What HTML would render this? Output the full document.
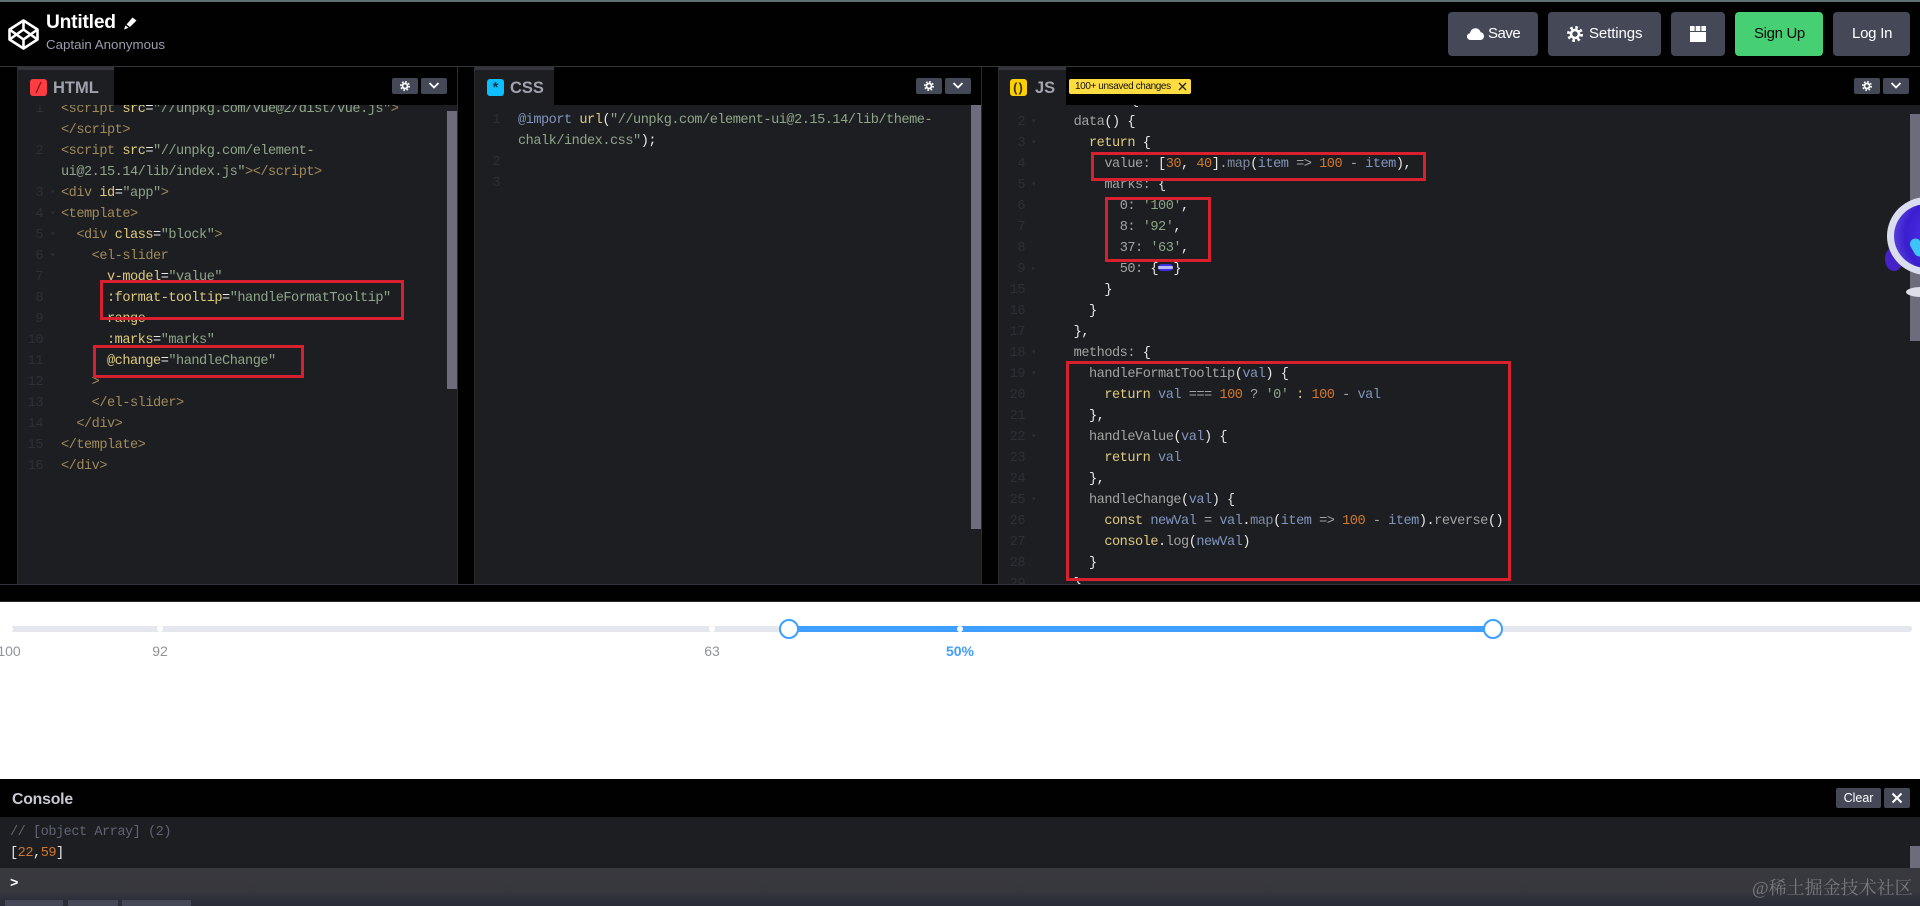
<!DOCTYPE html>
<html><head><meta charset="utf-8"><title>Untitled</title>
<style>
html,body{margin:0;padding:0;background:#010101;width:1920px;height:906px;overflow:hidden}
body{position:relative;font-family:"Liberation Sans",sans-serif;filter:blur(.35px)}
.a{position:absolute}
.btn{position:absolute;top:12px;height:44px;background:#444857;border-radius:4px;color:#fff;font-size:15px;line-height:44px}
.btn span{position:absolute;top:0;white-space:nowrap}
.sb{position:absolute;top:78px;width:26px;height:16px;background:#444857;border-radius:2px}
.tab{position:absolute;top:67px;height:38px;background:#1d1e22;border-top:3px solid #35363b;box-sizing:border-box}
.tt{position:absolute;top:79px;font-size:16.5px;font-weight:bold;color:#a0a2ad;line-height:18px}
.ic{position:absolute;top:79px;width:17px;height:17px;border-radius:3px}
.code{position:absolute;top:105px;height:479px;background:#1d1e22;overflow:hidden;font-family:"Liberation Mono",monospace;font-size:13.6px;letter-spacing:-.49px;color:#aaa}
.r{position:absolute;left:0;right:0;height:21px;line-height:21px;white-space:pre;transform:translateY(1px)}
.n{position:absolute;color:#2e2f34;text-align:right;width:30px;top:0}
.f{position:absolute;top:0;color:#2e2f34;font-size:7px;letter-spacing:0}
.x{position:absolute;top:0}
.h .x{margin-left:-1px}
.t{color:#a08a5b}.y{color:#ddca7e}.s{color:#8fa588}.w{color:#e8e8e8}.p{color:#a3a3a3}.v{color:#8195bd}.o{color:#d0782a}.m{color:#7d8aa0}
.red{position:absolute;border:3px solid #d8202e;box-sizing:border-box;z-index:5}
.sc{position:absolute;background:#6c6c7c;width:10px}
</style></head><body>

<div class="a" style="left:0;top:0;width:1920px;height:2px;background:#5f7070"></div>
<div class="a" style="left:0;top:66px;width:1920px;height:1px;background:#343538"></div>

<!-- logo -->
<svg class="a" style="left:7px;top:18px" width="33" height="33" viewBox="0 0 33 33" fill="none" stroke="#fff" stroke-width="2.6" stroke-linejoin="round">
<path d="M16.5 2.5L30.5 11.5V21.5L16.5 30.5L2.5 21.5V11.5Z"/>
<path d="M16.5 2.5V11.5M16.5 21.5V30.5M2.5 11.5L16.5 21.5L30.5 11.5M2.5 21.5L16.5 11.5L30.5 21.5"/>
</svg>
<div class="a" style="left:46px;top:11px;color:#fff;font-size:19.2px;font-weight:bold;line-height:24px;letter-spacing:-.2px">Untitled</div>
<svg class="a" style="left:123px;top:16px" width="15" height="15" viewBox="0 0 15 15"><path d="M9.5 1.5L13.5 4.5L7 11L3.5 8.5Z" fill="#fff"/><path d="M2.5 9.5L5.5 11.8L1 13.5Z" fill="#fff"/></svg>
<div class="a" style="left:46px;top:36px;color:#9b9dad;font-size:13.3px;line-height:18px">Captain Anonymous</div>

<!-- header buttons -->
<div class="btn" style="left:1448px;width:90px">
<svg class="a" style="left:19px;top:16px" width="17" height="12" viewBox="0 0 17 12"><path d="M4 12C1.5 12 0 10.5 0 8.6C0 6.8 1.3 5.5 3 5.3C3.4 2.4 5.6.3 8.5.3C11 .3 13 1.9 13.6 4.3C15.6 4.5 17 6.2 17 8.2C17 10.4 15.3 12 13 12Z" fill="#fff"/></svg>
<span style="left:40px;letter-spacing:-.5px">Save</span></div>
<div class="btn" style="left:1548px;width:113px">
<svg class="a" style="left:19px;top:14px" width="16" height="16" viewBox="0 0 16 16"><circle cx="8" cy="8" r="6.6" fill="none" stroke="#fff" stroke-width="2.8" stroke-dasharray="2.6 2.6"/><circle cx="8" cy="8" r="4" fill="none" stroke="#fff" stroke-width="2.6"/></svg>
<span style="left:41px;letter-spacing:-.1px">Settings</span></div>
<div class="btn" style="left:1671px;width:54px">
<svg class="a" style="left:19px;top:14px" width="16" height="16" viewBox="0 0 16 16" fill="#fff"><rect x="0" y="0" width="4.6" height="5"/><rect x="5.7" y="0" width="4.6" height="5"/><rect x="11.4" y="0" width="4.6" height="5"/><rect x="0" y="6" width="16" height="10"/></svg></div>
<div class="btn" style="left:1735px;width:88px;background:#47cf73;color:#0a0a0a"><span style="left:19px;letter-spacing:-.35px">Sign Up</span></div>
<div class="btn" style="left:1833px;width:77px"><span style="left:19px;letter-spacing:-.25px">Log In</span></div>

<!-- panel edges -->
<div class="a" style="left:17px;top:67px;width:1px;height:517px;background:#2b2c30"></div>
<div class="a" style="left:457px;top:67px;width:1px;height:517px;background:#2b2c30"></div>
<div class="a" style="left:474px;top:67px;width:1px;height:517px;background:#2b2c30"></div>
<div class="a" style="left:981px;top:67px;width:1px;height:517px;background:#2b2c30"></div>
<div class="a" style="left:998px;top:67px;width:1px;height:517px;background:#2b2c30"></div>

<!-- HTML panel -->
<div class="tab" style="left:18px;width:96px"></div>
<div class="ic" style="left:30px;background:#ff3c41"><svg width="17" height="17" viewBox="0 0 17 17"><path d="M11 3L6 14" stroke="#7a1a1e" stroke-width="1.3"/></svg></div>
<div class="tt" style="left:53px">HTML</div>
<div class="sb" style="left:392px"><svg class="a" style="left:8px;top:3px" width="10" height="10" viewBox="0 0 16 16"><circle cx="8" cy="8" r="6.6" fill="none" stroke="#fff" stroke-width="2.8" stroke-dasharray="2.6 2.6"/><circle cx="8" cy="8" r="4" fill="none" stroke="#fff" stroke-width="2.8"/></svg></div>
<div class="sb" style="left:421px"><svg class="a" style="left:7px;top:3px" width="12" height="9" viewBox="0 0 12 9"><path d="M1.5 2L6 6.5L10.5 2" fill="none" stroke="#fff" stroke-width="1.8"/></svg></div>
<div class="code h" style="left:18px;width:439px">
<div class="r" style="top:-7px"><span class="n" style="left:-5px">1</span><span class="x" style="left:44px"><span class="t">&lt;script</span> <span class="y">src</span><span class="w">=</span><span class="s">"//unpkg.com/vue@2/dist/vue.js"</span><span class="t">&gt;</span></span></div>
<div class="r" style="top:14px"><span class="x" style="left:44px"><span class="t">&lt;/script&gt;</span></span></div>
<div class="r" style="top:35px"><span class="n" style="left:-5px">2</span><span class="x" style="left:44px"><span class="t">&lt;script</span> <span class="y">src</span><span class="w">=</span><span class="s">"//unpkg.com/element-</span></span></div>
<div class="r" style="top:56px"><span class="x" style="left:44px"><span class="s">ui@2.15.14/lib/index.js"</span><span class="t">&gt;&lt;/script&gt;</span></span></div>
<div class="r" style="top:77px"><span class="n" style="left:-5px">3</span><span class="f" style="left:33px">▾</span><span class="x" style="left:44px"><span class="t">&lt;div</span> <span class="y">id</span><span class="w">=</span><span class="s">"app"</span><span class="t">&gt;</span></span></div>
<div class="r" style="top:98px"><span class="n" style="left:-5px">4</span><span class="f" style="left:33px">▾</span><span class="x" style="left:44px"><span class="t">&lt;template&gt;</span></span></div>
<div class="r" style="top:119px"><span class="n" style="left:-5px">5</span><span class="f" style="left:33px">▾</span><span class="x" style="left:44px">  <span class="t">&lt;div</span> <span class="y">class</span><span class="w">=</span><span class="s">"block"</span><span class="t">&gt;</span></span></div>
<div class="r" style="top:140px"><span class="n" style="left:-5px">6</span><span class="f" style="left:33px">▾</span><span class="x" style="left:44px">    <span class="t">&lt;el-slider</span></span></div>
<div class="r" style="top:161px"><span class="n" style="left:-5px">7</span><span class="x" style="left:44px">      <span class="y">v-model</span><span class="w">=</span><span class="s">"value"</span></span></div>
<div class="r" style="top:182px"><span class="n" style="left:-5px">8</span><span class="x" style="left:44px">      <span class="y">:format-tooltip</span><span class="w">=</span><span class="s">"handleFormatTooltip"</span></span></div>
<div class="r" style="top:203px"><span class="n" style="left:-5px">9</span><span class="x" style="left:44px">      <span class="y">range</span></span></div>
<div class="r" style="top:224px"><span class="n" style="left:-5px">10</span><span class="x" style="left:44px">      <span class="y">:marks</span><span class="w">=</span><span class="s">"marks"</span></span></div>
<div class="r" style="top:245px"><span class="n" style="left:-5px">11</span><span class="x" style="left:44px">      <span class="y">@change</span><span class="w">=</span><span class="s">"handleChange"</span></span></div>
<div class="r" style="top:266px"><span class="n" style="left:-5px">12</span><span class="x" style="left:44px">    <span class="t">&gt;</span></span></div>
<div class="r" style="top:287px"><span class="n" style="left:-5px">13</span><span class="x" style="left:44px">    <span class="t">&lt;/el-slider&gt;</span></span></div>
<div class="r" style="top:308px"><span class="n" style="left:-5px">14</span><span class="x" style="left:44px">  <span class="t">&lt;/div&gt;</span></span></div>
<div class="r" style="top:329px"><span class="n" style="left:-5px">15</span><span class="x" style="left:44px"><span class="t">&lt;/template&gt;</span></span></div>
<div class="r" style="top:350px"><span class="n" style="left:-5px">16</span><span class="x" style="left:44px"><span class="t">&lt;/div&gt;</span></span></div>
</div>
<div class="sc" style="left:447px;top:111px;height:278px"></div>

<!-- CSS panel -->
<div class="tab" style="left:475px;width:79px"></div>
<div class="ic" style="left:487px;background:#0ebeff"><div class="a" style="left:0;top:3px;width:17px;text-align:center;font:bold 15px/15px 'Liberation Mono',monospace;color:#0a3a50">*</div></div>
<div class="tt" style="left:510px">CSS</div>
<div class="sb" style="left:916px"><svg class="a" style="left:8px;top:3px" width="10" height="10" viewBox="0 0 16 16"><circle cx="8" cy="8" r="6.6" fill="none" stroke="#fff" stroke-width="2.8" stroke-dasharray="2.6 2.6"/><circle cx="8" cy="8" r="4" fill="none" stroke="#fff" stroke-width="2.8"/></svg></div>
<div class="sb" style="left:945px"><svg class="a" style="left:7px;top:3px" width="12" height="9" viewBox="0 0 12 9"><path d="M1.5 2L6 6.5L10.5 2" fill="none" stroke="#fff" stroke-width="1.8"/></svg></div>
<div class="code" style="left:475px;width:506px">
<div class="r" style="top:4px"><span class="n" style="left:-5px">1</span><span class="x" style="left:43px"><span class="v">@import</span> <span class="y">url</span><span class="w">(</span><span class="s">"//unpkg.com/element-ui@2.15.14/lib/theme-</span></span></div>
<div class="r" style="top:25px"><span class="x" style="left:43px"><span class="s">chalk/index.css"</span><span class="w">);</span></span></div>
<div class="r" style="top:46px"><span class="n" style="left:-5px">2</span></div>
<div class="r" style="top:67px"><span class="n" style="left:-5px">3</span></div>
</div>
<div class="sc" style="left:971px;top:105px;height:424px"></div>

<!-- JS panel -->
<div class="tab" style="left:999px;width:67px"></div>
<div class="ic" style="left:1010px;background:#fcd000"><div class="a" style="left:0;top:1px;width:17px;text-align:center;font:bold 13px/15px 'Liberation Sans',sans-serif;color:#3a2f00;letter-spacing:1px">()</div></div>
<div class="tt" style="left:1035px">JS</div>
<div class="a" style="left:1069px;top:79px;width:122px;height:15px;background:#ffdd40;border-radius:2px;color:#111;font-size:10px;line-height:15px;white-space:nowrap"><span class="a" style="left:6px;letter-spacing:-.4px">100+ unsaved changes</span>
<svg class="a" style="left:109px;top:3px" width="9" height="9" viewBox="0 0 9 9"><path d="M1 1L8 8M8 1L1 8" stroke="#222" stroke-width="1.3"/></svg></div>
<div class="sb" style="left:1854px"><svg class="a" style="left:8px;top:3px" width="10" height="10" viewBox="0 0 16 16"><circle cx="8" cy="8" r="6.6" fill="none" stroke="#fff" stroke-width="2.8" stroke-dasharray="2.6 2.6"/><circle cx="8" cy="8" r="4" fill="none" stroke="#fff" stroke-width="2.8"/></svg></div>
<div class="sb" style="left:1883px"><svg class="a" style="left:7px;top:3px" width="12" height="9" viewBox="0 0 12 9"><path d="M1.5 2L6 6.5L10.5 2" fill="none" stroke="#fff" stroke-width="1.8"/></svg></div>
<div class="code" style="left:999px;width:921px">
<div class="r" style="top:-15px"><span class="x" style="left:132px"><span class="w">{</span></span></div>
<div class="r" style="top:6px"><span class="n" style="left:-4px">2</span><span class="f" style="left:33px">▾</span><span class="x" style="left:44px">    <span class="p">data</span><span class="w">() {</span></span></div>
<div class="r" style="top:27px"><span class="n" style="left:-4px">3</span><span class="f" style="left:33px">▾</span><span class="x" style="left:44px">      <span class="y">return</span> <span class="w">{</span></span></div>
<div class="r" style="top:48px"><span class="n" style="left:-4px">4</span><span class="x" style="left:44px">        <span class="p">value:</span> <span class="w">[</span><span class="o">30</span><span class="w">,</span> <span class="o">40</span><span class="w">]</span><span class="p">.</span><span class="m">map</span><span class="w">(</span><span class="v">item</span> <span class="p">=&gt;</span> <span class="o">100</span> <span class="p">-</span> <span class="v">item</span><span class="w">),</span></span></div>
<div class="r" style="top:69px"><span class="n" style="left:-4px">5</span><span class="f" style="left:33px">▾</span><span class="x" style="left:44px">        <span class="p">marks:</span> <span class="w">{</span></span></div>
<div class="r" style="top:90px"><span class="n" style="left:-4px">6</span><span class="x" style="left:44px">          <span class="p">0:</span> <span class="s">'100'</span><span class="w">,</span></span></div>
<div class="r" style="top:111px"><span class="n" style="left:-4px">7</span><span class="x" style="left:44px">          <span class="p">8:</span> <span class="s">'92'</span><span class="w">,</span></span></div>
<div class="r" style="top:132px"><span class="n" style="left:-4px">8</span><span class="x" style="left:44px">          <span class="p">37:</span> <span class="s">'63'</span><span class="w">,</span></span></div>
<div class="r" style="top:153px"><span class="n" style="left:-4px">9</span><span class="f" style="left:33px">▸</span><span class="x" style="left:44px">          <span class="p">50:</span> <span class="w">{</span><span style="display:inline-block;width:15.3px;height:7px;background:#3a30e0;border-radius:4px;background-image:linear-gradient(#3a30e0 2px,#b8b8ff 2px,#b8b8ff 5px,#3a30e0 5px);vertical-align:1px"></span><span class="w">}</span></span></div>
<div class="r" style="top:174px"><span class="n" style="left:-4px">15</span><span class="x" style="left:44px">        <span class="w">}</span></span></div>
<div class="r" style="top:195px"><span class="n" style="left:-4px">16</span><span class="x" style="left:44px">      <span class="w">}</span></span></div>
<div class="r" style="top:216px"><span class="n" style="left:-4px">17</span><span class="x" style="left:44px">    <span class="w">},</span></span></div>
<div class="r" style="top:237px"><span class="n" style="left:-4px">18</span><span class="f" style="left:33px">▾</span><span class="x" style="left:44px">    <span class="p">methods:</span> <span class="w">{</span></span></div>
<div class="r" style="top:258px"><span class="n" style="left:-4px">19</span><span class="f" style="left:33px">▾</span><span class="x" style="left:44px">      <span class="p">handleFormatTooltip</span><span class="w">(</span><span class="v">val</span><span class="w">) {</span></span></div>
<div class="r" style="top:279px"><span class="n" style="left:-4px">20</span><span class="x" style="left:44px">        <span class="y">return</span> <span class="v">val</span> <span class="p">===</span> <span class="o">100</span> <span class="p">?</span> <span class="s">'0'</span> <span class="y">:</span> <span class="o">100</span> <span class="p">-</span> <span class="v">val</span></span></div>
<div class="r" style="top:300px"><span class="n" style="left:-4px">21</span><span class="x" style="left:44px">      <span class="w">},</span></span></div>
<div class="r" style="top:321px"><span class="n" style="left:-4px">22</span><span class="f" style="left:33px">▾</span><span class="x" style="left:44px">      <span class="p">handleValue</span><span class="w">(</span><span class="v">val</span><span class="w">) {</span></span></div>
<div class="r" style="top:342px"><span class="n" style="left:-4px">23</span><span class="x" style="left:44px">        <span class="y">return</span> <span class="v">val</span></span></div>
<div class="r" style="top:363px"><span class="n" style="left:-4px">24</span><span class="x" style="left:44px">      <span class="w">},</span></span></div>
<div class="r" style="top:384px"><span class="n" style="left:-4px">25</span><span class="f" style="left:33px">▾</span><span class="x" style="left:44px">      <span class="p">handleChange</span><span class="w">(</span><span class="v">val</span><span class="w">) {</span></span></div>
<div class="r" style="top:405px"><span class="n" style="left:-4px">26</span><span class="x" style="left:44px">        <span class="y">const</span> <span class="v">newVal</span> <span class="p">=</span> <span class="v">val</span><span class="w">.</span><span class="m">map</span><span class="w">(</span><span class="v">item</span> <span class="p">=&gt;</span> <span class="o">100</span> <span class="p">-</span> <span class="v">item</span><span class="w">).</span><span class="p">reverse</span><span class="w">()</span></span></div>
<div class="r" style="top:426px"><span class="n" style="left:-4px">27</span><span class="x" style="left:44px">        <span class="y">console</span><span class="w">.</span><span class="p">log</span><span class="w">(</span><span class="v">newVal</span><span class="w">)</span></span></div>
<div class="r" style="top:447px"><span class="n" style="left:-4px">28</span><span class="x" style="left:44px">      <span class="w">}</span></span></div>
<div class="r" style="top:468px"><span class="n" style="left:-4px">29</span><span class="x" style="left:44px">    <span class="w">}</span></span></div>
</div>
<div class="sc" style="left:1910px;top:114px;height:227px"></div>

<!-- mascot -->
<div class="a" style="left:1885px;top:247px;width:18px;height:24px;background:#4422c8;border-radius:50%"></div>
<div class="a" style="left:1887px;top:197px;width:80px;height:78px;border-radius:50%;background:#dcdcf0"></div>
<div class="a" style="left:1894px;top:204px;width:66px;height:64px;border-radius:50%;background:radial-gradient(circle at 75% 50%,#5a3cf0,#3a1ed0 65%,#6a5ae0)"></div>
<div class="a" style="left:1912px;top:238px;width:11px;height:19px;border-radius:6px;background:#3fc4fa;transform:rotate(-30deg)"></div>
<div class="a" style="left:1906px;top:287px;width:30px;height:10px;border-radius:50%;background:#dedee8"></div>

<!-- red boxes -->
<div class="red" style="left:100px;top:280px;width:304px;height:40px"></div>
<div class="red" style="left:93px;top:345px;width:211px;height:33px"></div>
<div class="red" style="left:1091px;top:152px;width:335px;height:29px"></div>
<div class="red" style="left:1105px;top:197px;width:106px;height:65px"></div>
<div class="red" style="left:1066px;top:361px;width:445px;height:220px"></div>

<!-- bottom of editors -->
<div class="a" style="left:0;top:584px;width:1920px;height:1px;background:#34353a"></div>

<!-- preview -->
<div class="a" style="left:0;top:601px;width:1920px;height:178px;background:#fff;overflow:hidden;border-top:1px solid #2a2a2a;box-sizing:border-box">
<div class="a" style="left:10px;top:24px;width:1902px;height:6px;background:#e4e7ed;border-radius:3px"></div>
<div class="a" style="left:789px;top:24px;width:703px;height:6px;background:#409eff"></div>
<div class="a" style="left:8px;top:24px;width:5px;height:6px;background:#fff;border-radius:50%"></div>
<div class="a" style="left:157px;top:24px;width:6px;height:6px;background:#fff;border-radius:50%"></div>
<div class="a" style="left:709px;top:24px;width:6px;height:6px;background:#fff;border-radius:50%"></div>
<div class="a" style="left:957px;top:24px;width:6px;height:6px;background:#fff;border-radius:50%"></div>
<div class="a" style="left:779px;top:17px;width:20px;height:20px;box-sizing:border-box;background:#fff;border:2px solid #409eff;border-radius:50%"></div>
<div class="a" style="left:1483px;top:17px;width:20px;height:20px;box-sizing:border-box;background:#fff;border:2px solid #409eff;border-radius:50%"></div>
<div class="a" style="left:-11px;top:40px;width:40px;text-align:center;color:#909399;font-size:14px;line-height:18px">100</div>
<div class="a" style="left:140px;top:40px;width:40px;text-align:center;color:#909399;font-size:14px;line-height:18px">92</div>
<div class="a" style="left:692px;top:40px;width:40px;text-align:center;color:#909399;font-size:14px;line-height:18px">63</div>
<div class="a" style="left:930px;top:40px;width:60px;text-align:center;color:#409eff;font-size:14px;font-weight:bold;line-height:18px">50%</div>
</div>

<!-- console -->
<div class="a" style="left:0;top:779px;width:1920px;height:38px;background:#010101"></div>
<div class="a" style="left:12px;top:790px;color:#c7c9d3;font-size:15.8px;font-weight:bold;line-height:20px;letter-spacing:-.2px">Console</div>
<div class="a" style="left:1836px;top:788px;width:45px;height:20px;background:#444857;border-radius:2px;color:#fff;font-size:12.5px;line-height:20px;text-align:center">Clear</div>
<div class="a" style="left:1884px;top:788px;width:26px;height:20px;background:#444857;border-radius:2px"><svg class="a" style="left:7px;top:4px" width="12" height="12" viewBox="0 0 12 12"><path d="M1.5 1.5L10.5 10.5M10.5 1.5L1.5 10.5" stroke="#fff" stroke-width="2"/></svg></div>
<div class="a" style="left:0;top:817px;width:1920px;height:51px;background:#1d1e22;font-family:'Liberation Mono',monospace;font-size:13.6px;letter-spacing:-.49px;white-space:pre">
<div class="a" style="left:10px;top:5px;line-height:21px;color:#5f6375">// [object Array] (2)</div>
<div class="a" style="left:10px;top:26px;line-height:21px"><span class="w">[</span><span class="o">22</span><span class="w">,</span><span class="o">59</span><span class="w">]</span></div>
</div>
<div class="sc" style="left:1910px;top:846px;height:22px"></div>
<div class="a" style="left:0;top:868px;width:1920px;height:38px;background:linear-gradient(#38393e 0,#37383d 60%,#2c2f3a 85%,#2a2d38 100%)"></div>
<div class="a" style="left:10px;top:875px;color:#fff;font:bold 14px/18px 'Liberation Mono',monospace">&gt;</div>
<div class="a" style="left:5px;top:900px;width:58px;height:6px;background:#444857"></div>
<div class="a" style="left:68px;top:900px;width:50px;height:6px;background:#444857"></div>
<div class="a" style="left:122px;top:900px;width:69px;height:6px;background:#444857"></div>
<div class="a" style="left:1752px;top:877px;color:#77787c;font-family:'Liberation Serif','Noto Serif CJK SC',serif;font-size:18px;line-height:22px;white-space:nowrap">@稀土掘金技术社区</div>

</body></html>
